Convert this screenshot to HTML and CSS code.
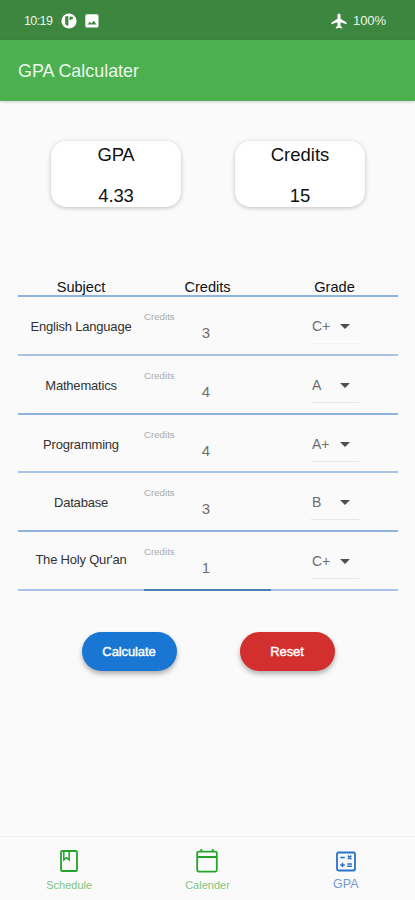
FILE: index.html
```html
<!DOCTYPE html>
<html lang="en">
<head>
<meta charset="utf-8">
<title>GPA Calculater</title>
<link rel="stylesheet" href="styles.css">
</head>
<body>
<div class="status">
  <span class="time">10:19</span>
  <svg class="ic-p" width="16" height="16" viewBox="0 0 16 16"><circle cx="8" cy="8" r="7.6" fill="#fff"/><path d="M4.200 3.200h3.200v9.400H5.600L4.200 11z" fill="#3c863f"/><path d="M8.600 3.600h1.600v3.400H8.600z" fill="#3c863f"/><circle cx="10.800" cy="5" r="1.300" fill="#3c863f"/></svg>
  <svg class="ic-img" width="14" height="14" viewBox="0 0 14 14"><rect x=".3" y=".3" width="13.2" height="13.2" rx="1.6" fill="#fff"/><path d="M2.700 10.600 4.800 7.800l1.600 1.800 2.300-2.900 2.800 3.900z" fill="#3c863f"/></svg>
  <svg class="ic-plane" width="18" height="18" viewBox="0 0 24 24"><path fill="#fff" d="M10 9V4a2 2 0 0 1 4 0v5l8 5v2.200l-8-2.400V18.500l2.200 1.700V22L12 21l-4.200 1v-1.800L10 18.500v-4.700L2 16.200V14z"/></svg>
  <span class="battery">100%</span>
</div>
<header class="appbar">GPA Calculater</header>
<main>
  <section class="cards">
    <div class="card"><span>GPA</span><span>4.33</span></div>
    <div class="card"><span>Credits</span><span>15</span></div>
  </section>
  <section class="table">
    <div class="row head"><span>Subject</span><span>Credits</span><span>Grade</span></div>
    <div class="row"><span class="subject">English Language</span><div class="field"><label>Credits</label><b>3</b></div><div class="grade"><div class="select faint"><span>C+</span><i></i></div></div></div>
    <div class="row"><span class="subject">Mathematics</span><div class="field"><label>Credits</label><b>4</b></div><div class="grade"><div class="select"><span>A</span><i></i></div></div></div>
    <div class="row"><span class="subject">Programming</span><div class="field"><label>Credits</label><b>4</b></div><div class="grade"><div class="select"><span>A+</span><i></i></div></div></div>
    <div class="row"><span class="subject">Database</span><div class="field"><label>Credits</label><b>3</b></div><div class="grade"><div class="select"><span>B</span><i></i></div></div></div>
    <div class="row last"><span class="subject">The Holy Qur'an</span><div class="field focus"><label>Credits</label><b>1</b></div><div class="grade"><div class="select"><span>C+</span><i></i></div></div></div>
  </section>
  <section class="actions">
    <button class="blue">Calculate</button>
    <button class="red">Reset</button>
  </section>
</main>
<nav>
  <div class="tab"><svg width="24" height="26" viewBox="0 0 24 26" fill="none" stroke="#22a52a" stroke-width="1.800"><rect x="4" y="3" width="16" height="20" rx="1.300"/><path d="M6.800 3v8.800l2.700-2.200 2.700 2.200V3" stroke-width="1.500"/></svg><span>Schedule</span></div>
  <div class="tab"><svg width="24" height="26" viewBox="0 0 24 26" fill="none" stroke="#22a52a" stroke-width="1.800"><rect x="2.200" y="3.600" width="19.600" height="20" rx="1.500"/><path d="M2.200 9h19.600M6.300 1v3M17.700 1v3"/></svg><span>Calender</span></div>
  <div class="tab active"><svg width="24" height="26" viewBox="0 0 24 26" fill="none" stroke="#2870c8" stroke-width="1.800"><rect x="3" y="3.500" width="18" height="18" rx="1.700"/><path stroke-width="1.500" d="M6.200 8.500h4.600M13.800 6.600l3.600 3.600M17.400 6.600l-3.600 3.600M6.200 16h4.600M8.500 13.700v4.600M13.300 15h4.600M13.300 17.300h4.600"/></svg><span>GPA</span></div>
</nav>
</body>
</html>
```
FILE: styles.css
```css
* { box-sizing: border-box; }
body {
  margin: 0;
  height: 900px;
  display: flex;
  flex-direction: column;
  overflow: hidden;
  background: #fafafa;
  color: #111;
  font-family: "Liberation Sans", Arial, sans-serif;
}
.status {
  height: 40px;
  flex: none;
  display: flex;
  align-items: center;
  padding: 1px 29px 0 24px;
  background: #3c863f;
  color: #e9f5e9;
  font-size: 12.5px;
}
.time { width: 37px; letter-spacing: -.6px; }
.ic-img { margin-left: 8px; }
.ic-plane { margin-left: auto; margin-right: 5px; }
.battery { font-size: 13px; width: 33px; letter-spacing: -.1px; }
.appbar {
  height: 61px;
  flex: none;
  padding-left: 18px;
  line-height: 62px;
  font-size: 17.900px;
  color: #eaf7ea;
  background: #4caf50;
  border-bottom: 1px solid #5cae5f;
  box-shadow: 0 1px 3px rgba(0,0,0,.18);
}
main { flex: 1; }
.cards { display: flex; gap: 54px; padding: 40px 0 0 51px; }
.card {
  width: 130px;
  height: 66px;
  border-radius: 15px;
  background: #fff;
  box-shadow: 0 1px 4px rgba(0,0,0,.24);
  display: flex;
  flex-direction: column;
  align-items: center;
  justify-content: space-between;
  padding: 3px 0 1px;
  font-size: 18.5px;
  line-height: 21px;
}
.card:first-child { letter-spacing: -.3px; }
.card span:last-child { letter-spacing: -.1px; }
.table { margin: 70px 17px 0 18px; }
.row {
  display: grid;
  grid-template-columns: 126px 127px 127px;
  height: 58.800px;
  border-bottom: 2px solid #a9c3e6;
}
.row:nth-child(odd) { border-color: #8fb3da; }
.row.head {
  height: 20px;
  font-size: 14.600px;
  line-height: 20px;
  text-align: center;
}
.subject {
  font-size: 13px;
  line-height: 60px;
  letter-spacing: -.2px;
  text-align: center;
  color: #333;
}
.last .subject { line-height: 56px; }
.field { display: flex; flex-direction: column; height: 58.800px; }
.field label { font-size: 9.700px; line-height: 12px; margin-top: 14px; color: #aaa; }
.field b { font-weight: 400; font-size: 15px; line-height: 18px; margin-top: 1px; padding-right: 3px; text-align: center; color: #707070; }
.focus { border-bottom: 2px solid #4c80b5; }
.grade { padding: 16px 0 0 40px; }
.select {
  width: 48px;
  height: 31px;
  display: flex;
  align-items: flex-start;
  justify-content: space-between;
  padding: 5px 9px 0 1px;
  border-bottom: 1px solid #e6e6e6;
  font-size: 14px;
  line-height: 16px;
  color: #6d6d6d;
}
.select.faint { border-color: #f1f1f1; }
.select i { border: 5px solid transparent; border-top-color: #505050; border-bottom: 0; margin-top: 6px; }
.actions { display: flex; gap: 63px; padding: 41px 0 0 81.500px; }
button {
  width: 95px;
  height: 39px;
  padding: 1px 0 0;
  border: 0;
  border-radius: 20px;
  font: 13px "Liberation Sans", Arial, sans-serif;
  letter-spacing: -.1px;
  color: #fff;
  -webkit-text-stroke: .4px #fff;
  box-shadow: 0 3px 5px rgba(0,0,0,.3);
}
.blue { background: #1976d2; }
.red { background: #d32f2f; }
nav {
  height: 64px;
  flex: none;
  display: grid;
  grid-template-columns: repeat(3, 1fr);
  border-top: 1px solid #f1f1f1;
}
.tab {
  display: flex;
  flex-direction: column;
  align-items: center;
  padding-top: 11px;
  color: #80c483;
  font-size: 11px;
  line-height: 14px;
}
.tab span { margin-top: 4px; }
.tab.active { padding-top: 12px; color: #7299d0; font-size: 12.500px; }
.tab.active span { margin-top: 2px; }
```
